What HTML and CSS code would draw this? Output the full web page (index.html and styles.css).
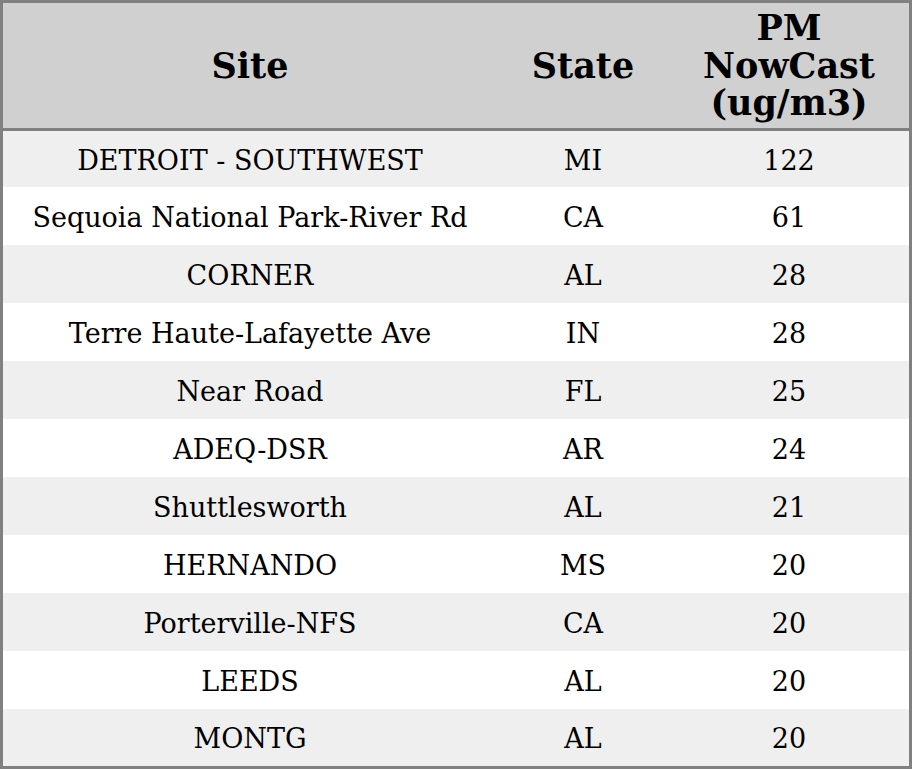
FILE: index.html
```html
<!DOCTYPE html>
<html>
<head>
<meta charset="utf-8">
<link rel="stylesheet" href="styles.css">
</head>
<body>
<table class="data">
  <colgroup>
    <col class="c-site">
    <col class="c-state">
    <col class="c-pm">
  </colgroup>
  <thead>
    <tr><th>Site</th><th>State</th><th>PM<br>NowCast<br>(ug/m3)</th></tr>
  </thead>
  <tbody>
    <tr><td>DETROIT - SOUTHWEST</td><td>MI</td><td>122</td></tr>
    <tr><td>Sequoia National Park-River Rd</td><td>CA</td><td>61</td></tr>
    <tr><td>CORNER</td><td>AL</td><td>28</td></tr>
    <tr><td>Terre Haute-Lafayette Ave</td><td>IN</td><td>28</td></tr>
    <tr><td>Near Road</td><td>FL</td><td>25</td></tr>
    <tr><td>ADEQ-DSR</td><td>AR</td><td>24</td></tr>
    <tr><td>Shuttlesworth</td><td>AL</td><td>21</td></tr>
    <tr><td>HERNANDO</td><td>MS</td><td>20</td></tr>
    <tr><td>Porterville-NFS</td><td>CA</td><td>20</td></tr>
    <tr><td>LEEDS</td><td>AL</td><td>20</td></tr>
    <tr><td>MONTG</td><td>AL</td><td>20</td></tr>
  </tbody>
</table>
</body>
</html>
```
FILE: styles.css
```css
html, body {
  margin: 0;
  padding: 0;
  background: #ffffff;
}
.data {
  width: 912px;
  height: 769px;
  border-collapse: separate;
  border-spacing: 0;
  border: 3px solid #808080;
  box-sizing: border-box;
  font-family: "DejaVu Serif", serif;
  color: #000;
  table-layout: fixed;
}
.c-site { width: 494px; }
.c-state { width: 172px; }
.c-pm { width: 240px; }
.data th {
  background: #d0d0d0;
  font-size: 35px;
  font-weight: bold;
  line-height: 37.5px;
  height: 128px;
  padding: 0;
  text-align: center;
  vertical-align: middle;
  border-bottom: 3px solid #808080;
  box-sizing: border-box;
}
.data td {
  font-size: 27px;
  line-height: 30px;
  text-align: center;
  vertical-align: middle;
  padding: 3px 0 0;
  height: 58px;
  box-sizing: border-box;
}
.data tbody tr:first-child td { height: 56px; }
.data tbody tr:last-child td { height: 57px; }
.data tbody tr:nth-child(odd) td { background: #efefef; }
.data tbody tr:nth-child(even) td { background: #ffffff; }
```
